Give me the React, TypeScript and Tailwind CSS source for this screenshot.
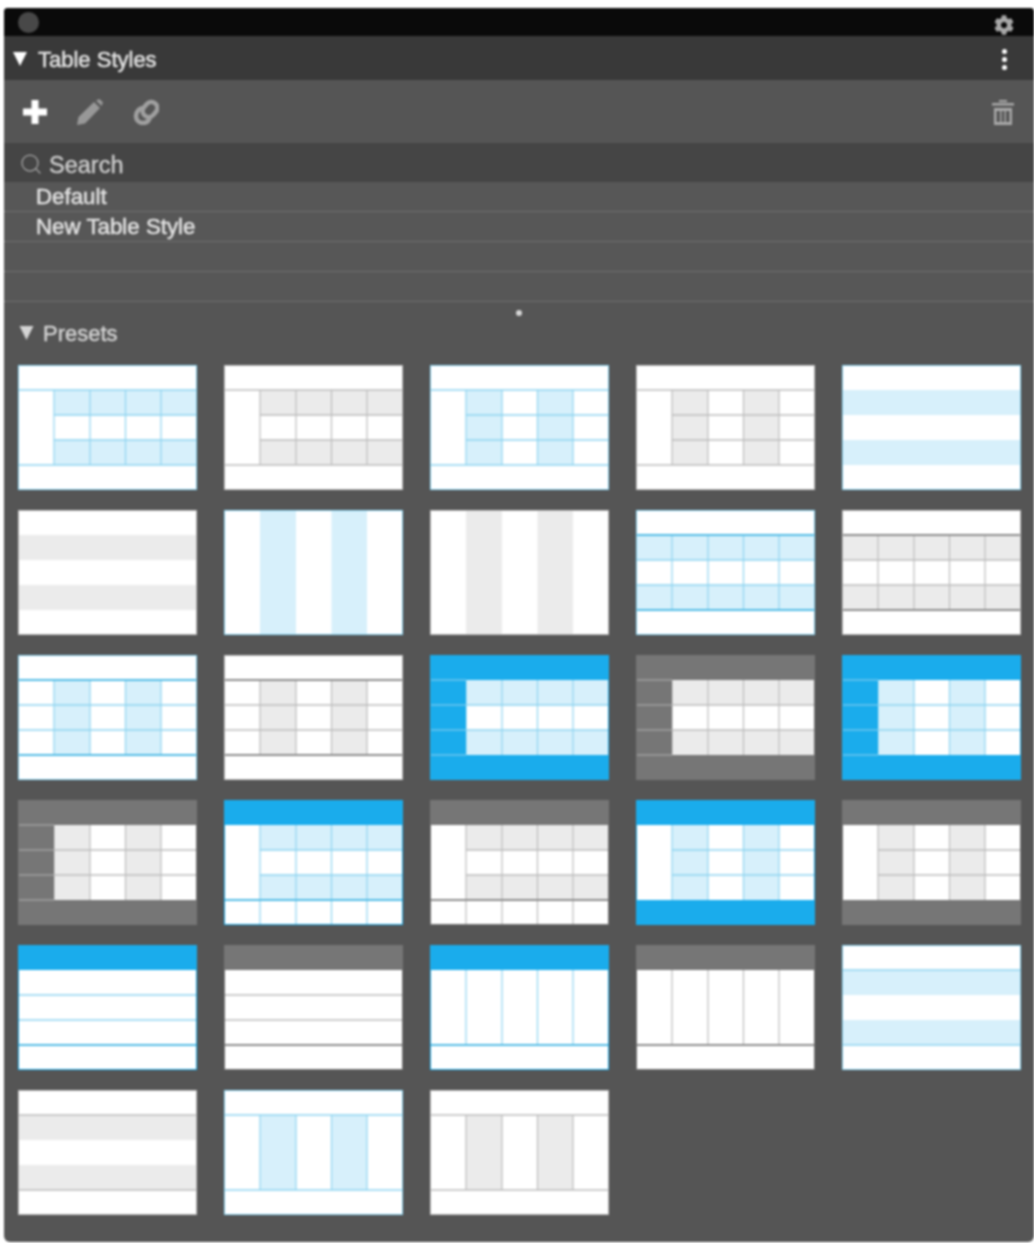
import { Search } from 'lucide-react'
import { FaCog } from 'react-icons/fa'

type Tone = 'blue' | 'gray'

interface PresetSpec {
  rowBand?: 'full' | 'inner'
  colBand?: 'body' | 'all'
  fillHeader?: boolean
  fillFooter?: boolean
  fillCol?: boolean
  top?: 'thin' | 'thick'
  bottom?: 'thin' | 'thick'
  middle?: 'full' | 'inner'
  verticals?: [number, number]
}

const palette = {
  blue: { fill: '#1aacec', band: '#d7f0fb', thin: '#8fd4f0', thick: '#55bde6', edge: '#84d0ef', onFill: '#6cc6ee' },
  gray: { fill: '#767676', band: '#ebebeb', thin: '#bcbcbc', thick: '#8e8e8e', edge: '#bdbdbd', onFill: '#a0a0a0' },
}

const COLS = [36, 72, 107.5, 143]
const ROWS = [25, 50, 75, 100]

// каждая схема идет парой: голубая и серая
const specs: PresetSpec[] = [
  { rowBand: 'inner', top: 'thin', bottom: 'thin', middle: 'inner', verticals: [25, 100] },
  { colBand: 'body', top: 'thin', bottom: 'thin', middle: 'inner', verticals: [25, 100] },
  { rowBand: 'full' },
  { colBand: 'all' },
  { rowBand: 'full', top: 'thick', bottom: 'thick', middle: 'full', verticals: [25, 100] },
  { colBand: 'body', top: 'thick', bottom: 'thick', middle: 'full', verticals: [25, 100] },
  { rowBand: 'inner', fillHeader: true, fillFooter: true, fillCol: true, middle: 'inner', verticals: [25, 100] },
  { colBand: 'body', fillHeader: true, fillFooter: true, fillCol: true, middle: 'inner', verticals: [25, 100] },
  { rowBand: 'inner', fillHeader: true, bottom: 'thick', middle: 'inner', verticals: [25, 125] },
  { colBand: 'body', fillHeader: true, fillFooter: true, middle: 'inner', verticals: [25, 100] },
  { fillHeader: true, bottom: 'thick', middle: 'full' },
  { fillHeader: true, bottom: 'thick', verticals: [25, 100] },
  { rowBand: 'full', top: 'thin', bottom: 'thin' },
  { colBand: 'body', top: 'thin', bottom: 'thin', verticals: [25, 100] },
]

const presets = specs.flatMap((spec) => [
  { spec, tone: 'blue' as Tone },
  { spec, tone: 'gray' as Tone },
])

function PresetThumb({ spec, tone }: { spec: PresetSpec; tone: Tone }) {
  const c = palette[tone]
  const bandX = spec.rowBand === 'inner' ? COLS[0] : 0

  return (
    <svg viewBox="0 0 179 125" preserveAspectRatio="none" className="block h-[125px] w-full">
      <rect width="179" height="125" fill="#fff" />
      {spec.rowBand && [25, 75].map((y) => (
        <rect key={y} x={bandX} y={y} width={179 - bandX} height="25" fill={c.band} />
      ))}
      {spec.colBand && [0, 2].map((i) => (
        <rect
          key={i}
          x={COLS[i]}
          y={spec.colBand === 'all' ? 0 : 25}
          width={COLS[i + 1] - COLS[i]}
          height={spec.colBand === 'all' ? 125 : 75}
          fill={c.band}
        />
      ))}
      {spec.verticals && COLS.map((x) => (
        <line key={x} x1={x} x2={x} y1={spec.verticals![0]} y2={spec.verticals![1]} stroke={c.thin} strokeWidth="1.2" />
      ))}
      {spec.middle && [50, 75].map((y) => (
        <line key={y} x1={spec.middle === 'inner' ? COLS[0] : 0} x2="179" y1={y} y2={y} stroke={c.thin} strokeWidth="1.4" />
      ))}
      {spec.top && (
        <line x1="0" x2="179" y1="25" y2="25" stroke={spec.top === 'thick' ? c.thick : c.thin} strokeWidth={spec.top === 'thick' ? 2.2 : 1.4} />
      )}
      {spec.bottom && (
        <line x1="0" x2="179" y1="100" y2="100" stroke={spec.bottom === 'thick' ? c.thick : c.thin} strokeWidth={spec.bottom === 'thick' ? 2.2 : 1.4} />
      )}
      {spec.fillHeader && <rect width="179" height="25" fill={c.fill} />}
      {spec.fillFooter && <rect y="100" width="179" height="25" fill={c.fill} />}
      {spec.fillCol && <rect y="25" width={COLS[0]} height="75" fill={c.fill} />}
      {spec.fillCol && ROWS.map((y) => (
        <line key={y} x1="0" x2={COLS[0]} y1={y} y2={y} stroke={c.onFill} strokeWidth="1.6" />
      ))}
      <rect x="0.5" y="0.5" width="178" height="124" fill="none" stroke={spec.fillHeader ? c.fill : c.edge} strokeWidth="1" />
    </svg>
  )
}

function Triangle({ className }: { className: string }) {
  return (
    <svg viewBox="0 0 14 14" className={className}>
      <polygon points="0,0 14,0 7,14" fill="currentColor" />
    </svg>
  )
}

function PlusIcon() {
  return (
    <svg viewBox="0 0 24 24" className="h-6 w-6 text-white">
      <polygon points="8.5,0 15.5,0 15.5,8.5 24,8.5 24,15.5 15.5,15.5 15.5,24 8.5,24 8.5,15.5 0,15.5 0,8.5 8.5,8.5" fill="currentColor" />
    </svg>
  )
}

function PencilIcon() {
  return (
    <svg viewBox="0 0 26 26" className="h-[26px] w-[26px] text-[#989898]">
      <polygon points="0,26 1.5,18 17,3 23,9 8,24.5" fill="currentColor" />
      <polygon points="19,1.5 22.5,0 26,3.5 24.5,7" fill="currentColor" />
    </svg>
  )
}

function LinkIcon() {
  return (
    <svg viewBox="0 0 26 26" className="h-[26px] w-[26px] text-[#a0a0a0]" fill="none" stroke="currentColor" strokeWidth="4.5">
      <rect x="11" y="2.5" width="12" height="16" rx="6" transform="rotate(40 17 10.5)" />
      <path d="M11 9 C6 9 3 13 3 17 C3 21 6 24 10 24 C13 24 16 22 17 18" />
    </svg>
  )
}

function TrashIcon() {
  return (
    <svg viewBox="0 0 22 25" className="mt-[2px] h-[25px] w-[22px] text-[#a8a8a8]" fill="currentColor">
      <rect x="7" y="0" width="8" height="2" />
      <rect x="0" y="3" width="22" height="2.5" />
      <path d="M2 8 H20 V25 H2 Z M4.5 11 V22 H8 V11 Z M9.5 11 V22 H12.5 V11 Z M14 11 V22 H17.5 V11 Z" fillRule="evenodd" />
    </svg>
  )
}

export default function App() {
  return (
    <div className="min-h-[1243px] overflow-hidden bg-white pl-1 pt-2 font-['Liberation_Sans',Arial,sans-serif]">
      <div className="h-[1234px] w-[1030px] overflow-hidden rounded-b-[6px] rounded-t-[4px] bg-[#555555] blur-[0.9px]">
        {/* Заголовок окна */}
        <div className="flex h-7 items-center justify-between bg-[#0a0a0a] pl-[14px] pr-5">
          <div className="h-[21px] w-[21px] rounded-full bg-[#484848]" />
          <FaCog className="mt-[6px] text-[20px] text-[#a8a8a8]" />
        </div>

        <div className="flex h-11 items-center justify-between bg-[#393939] pl-[9px] pr-[27px] pt-[2px]">
          <div className="flex items-center gap-[11px]">
            <Triangle className="h-[14px] w-[14px] text-[#ffffff]" />
            <span className="text-[22px] text-[#e2e2e2] [-webkit-text-stroke:0.5px_currentColor]">Table Styles</span>
          </div>
          <div className="mt-[1px] flex flex-col gap-[3px]">
            <div className="h-[5px] w-[5px] rounded-full bg-white" />
            <div className="h-[5px] w-[5px] rounded-full bg-white" />
            <div className="h-[5px] w-[5px] rounded-full bg-white" />
          </div>
        </div>

        {/* Панель инструментов */}
        <div className="flex h-[63px] items-center justify-between bg-[#555555] pl-[19px] pr-[20px]">
          <div className="flex items-center gap-[30px]">
            <PlusIcon />
            <PencilIcon />
            <LinkIcon />
          </div>
          <TrashIcon />
        </div>

        <div className="flex h-[39px] items-center gap-[6px] bg-[#454545] pl-[15px] pt-[6px]">
          <Search className="mb-[3px] h-6 w-6 text-[#a8a8a8]" strokeWidth={1.25} />
          <span className="text-[23.5px] text-[#cccccc] [-webkit-text-stroke:0.4px_currentColor]">Search</span>
        </div>

        {/* Список стилей */}
        <div className="bg-[#575757]">
          {['Default', 'New Table Style', '', ''].map((name, i) => (
            <div key={i} className="flex h-[30px] items-center border-b border-dotted border-[#858585] pl-8 text-[22.3px] text-[#e2e2e2] [-webkit-text-stroke:0.5px_currentColor]">
              {name}
            </div>
          ))}
        </div>

        <div className="flex h-5 items-center justify-center pt-[2px]">
          <div className="h-[6px] w-[6px] rounded-full bg-[#d8d8d8]" />
        </div>

        <div className="flex h-[22px] items-center gap-[9px] pl-[15px] text-[#d4d4d4]">
          <Triangle className="h-[14px] w-[15px]" />
          <span className="text-[22px] [-webkit-text-stroke:0.4px_currentColor]">Presets</span>
        </div>

        <div className="grid grid-cols-[repeat(5,179px)] gap-x-[27px] gap-y-5 pl-[14px] pt-[21px]">
          {presets.map((p, i) => (
            <PresetThumb key={i} spec={p.spec} tone={p.tone} />
          ))}
        </div>
      </div>
    </div>
  )
}
